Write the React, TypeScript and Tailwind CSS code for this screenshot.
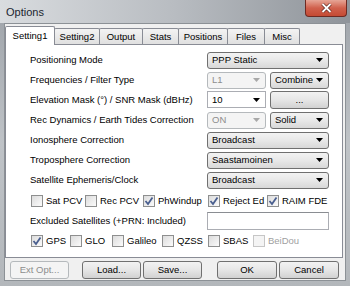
import React from 'react'

const font = { fontFamily: '"Liberation Sans", Arial, sans-serif' }

function Arrow({ disabled }: { disabled?: boolean }) {
  return (
    <svg width="7" height="4" viewBox="0 0 7 4" className="shrink-0">
      <path d="M0 0 H7 L3.5 4 Z" fill={disabled ? '#a8a8a8' : '#000'} />
    </svg>
  )
}

function Combo({ text, w = 'w-[122px]', kind = 'normal' }: { text: string; w?: string; kind?: 'normal' | 'disabled' | 'edit' }) {
  const base =
    kind === 'disabled'
      ? 'border-[#b5b9bc] bg-[#f4f4f4] text-[#8d8d8d] rounded-[3px]'
      : kind === 'edit'
      ? 'border-[#abadb3] bg-white text-black'
      : 'border-[#707070] bg-gradient-to-b from-[#f3f3f3] via-[#e8e8e8] to-[#d8d8d8] text-black rounded-[3px]'
  return (
    <div className={`${w} h-[17px] border flex items-center pl-[4px] pr-[5px] ${base}`}>
      <span className="flex-1 overflow-hidden whitespace-nowrap leading-none mr-[3px]">{text}</span>
      <Arrow disabled={kind === 'disabled'} />
    </div>
  )
}

function Button({ text, w = 'w-[59px]', disabled }: { text: string; w?: string; disabled?: boolean }) {
  return (
    <div
      className={`${w} h-[18px] border rounded-[3px] flex items-center justify-center leading-none ${
        disabled
          ? 'border-[#b5b9bc] bg-[#f4f4f4] text-[#8d8d8d]'
          : 'border-[#707070] bg-gradient-to-b from-[#f2f2f2] via-[#e6e6e6] to-[#d2d2d2] text-black'
      }`}
    >
      {text}
    </div>
  )
}

function Check({ label, checked, disabled, w }: { label: string; checked?: boolean; disabled?: boolean; w?: string }) {
  return (
    <div className={`flex items-center gap-[3px] ${w ?? ''}`}>
      <div
        className={`w-[12px] h-[12px] border flex items-center justify-center ${
          disabled ? 'border-[#c6c6c6] bg-[#f4f4f4]' : 'border-[#8e8f8f] bg-gradient-to-br from-[#dcdcdc] to-[#fbfbfb]'
        }`}
      >
        {checked && (
          <svg width="10" height="10" viewBox="0 0 10 10">
            <path d="M1.5 5 L4 8 L8.5 1.5" stroke="#4a5f8f" strokeWidth="1.8" fill="none" />
          </svg>
        )}
      </div>
      <span className={`leading-none ${disabled ? 'text-[#a0a0a0]' : 'text-black'}`}>{label}</span>
    </div>
  )
}

function Row({ label, children }: { label: string; children: React.ReactNode }) {
  return (
    <div className="flex h-[20px] items-center pr-[13px]">
      <span className="flex-1 pl-[24px] whitespace-nowrap leading-none">{label}</span>
      <div className="w-[122px] flex justify-between">{children}</div>
    </div>
  )
}

const tabs = [
  { t: 'Setting2', w: 'w-[46px]' },
  { t: 'Output', w: 'w-[44px]' },
  { t: 'Stats', w: 'w-[37px]' },
  { t: 'Positions', w: 'w-[50px]' },
  { t: 'Files', w: 'w-[38px]' },
  { t: 'Misc', w: 'w-[36px]' },
]

export default function App() {
  return (
    <div
      style={font}
      className="w-[350px] h-[286px] flex flex-col bg-gradient-to-b from-[#9da2a8] via-[#bfc3c7] to-[#b3b7bb] text-[9.5px] text-black"
    >
      {/* title bar */}
      <div className="h-[23px] flex items-start justify-between pl-[6px] pr-[3px] bg-gradient-to-r from-[#d9dcdf] via-[#b8bcc1] to-[#8f949a]">
        <span className="text-[11px] text-[#1b2530] mt-[7px] leading-none">Options</span>
        <div className="w-[42px] h-[17px] rounded-b-[4px] border border-t-0 border-[#6e2a22] bg-gradient-to-b from-[#e6a596] via-[#d0604c] to-[#c44a33] flex items-center justify-center">
          <svg width="11" height="10" viewBox="0 0 11 10">
            <path d="M1.5 1 L9.5 9 M9.5 1 L1.5 9" stroke="#5a231c" strokeWidth="3.2" />
            <path d="M1.5 1 L9.5 9 M9.5 1 L1.5 9" stroke="#fff" strokeWidth="1.8" />
          </svg>
        </div>
      </div>

      {/* client */}
      <div className="flex-1 mx-[4px] mb-[5px] border border-[#8c9196] bg-[#f0f0f0] flex flex-col">
        {/* tabs */}
        <div className="flex items-end h-[20px] relative z-10">
          <div className="w-[50px] h-[19px] bg-white border border-b-0 border-[#898c95] rounded-t-[2px] flex items-center justify-center leading-none -mb-px">
            Setting1
          </div>
          {tabs.map((tab) => (
            <div
              key={tab.t}
              className={`${tab.w} h-[16px] -ml-px bg-gradient-to-b from-[#f3f3f3] to-[#e0e0e0] border border-b-0 border-[#898c95] rounded-t-[2px] flex items-center justify-center leading-none`}
            >
              {tab.t}
            </div>
          ))}
        </div>

        {/* panel */}
        <div className="mr-[2px] h-[214px] bg-white border border-[#898c95] pt-[5px] flex flex-col">
          <Row label="Positioning Mode">
            <Combo text="PPP Static" />
          </Row>
          <Row label="Frequencies / Filter Type">
            <Combo text="L1" w="w-[59px]" kind="disabled" />
            <Combo text="Combined" w="w-[59px]" />
          </Row>
          <Row label="Elevation Mask (°) / SNR Mask (dBHz)">
            <Combo text="10" w="w-[59px]" kind="edit" />
            <Button text="..." w="w-[59px]" />
          </Row>
          <Row label="Rec Dynamics / Earth Tides Correction">
            <Combo text="ON" w="w-[59px]" kind="disabled" />
            <Combo text="Solid" w="w-[59px]" />
          </Row>
          <Row label="Ionosphere Correction">
            <Combo text="Broadcast" />
          </Row>
          <Row label="Troposphere Correction">
            <Combo text="Saastamoinen" />
          </Row>
          <Row label="Satellite Ephemeris/Clock">
            <Combo text="Broadcast" />
          </Row>
          <div className="flex h-[21px] items-center pl-[25px]">
            <Check label="Sat PCV" w="w-[54px]" />
            <Check label="Rec PCV" w="w-[58px]" />
            <Check label="PhWindup" checked w="w-[65px]" />
            <Check label="Reject Ed" checked w="w-[59px]" />
            <Check label="RAIM FDE" checked />
          </div>
          <Row label="Excluded Satellites (+PRN: Included)">
            <div className="w-[122px] h-[18px] bg-white border border-[#abadb3] border-t-[#8a8d92]" />
          </Row>
          <div className="flex h-[20px] items-center pl-[25px]">
            <Check label="GPS" checked w="w-[39px]" />
            <Check label="GLO" w="w-[42px]" />
            <Check label="Galileo" w="w-[50px]" />
            <Check label="QZSS" w="w-[46px]" />
            <Check label="SBAS" w="w-[45px]" />
            <Check label="BeiDou" disabled />
          </div>
        </div>

        {/* buttons */}
        <div className="flex items-center pt-[3px] pl-[5px]">
          <Button text="Ext Opt..." disabled />
          <div className="w-[13px]" />
          <Button text="Load..." />
          <div className="w-[2px]" />
          <Button text="Save..." />
          <div className="w-[15px]" />
          <Button text="OK" w="w-[60px]" />
          <div className="w-[2px]" />
          <Button text="Cancel" w="w-[60px]" />
        </div>
      </div>
    </div>
  )
}
